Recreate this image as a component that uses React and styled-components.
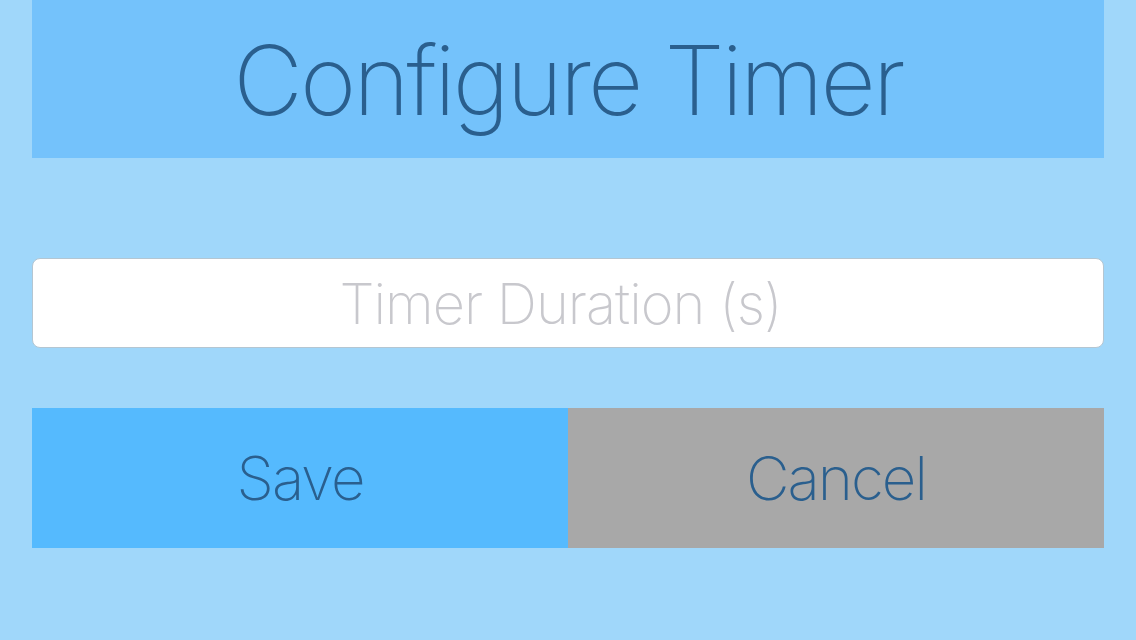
import React from "react";
import styled, { createGlobalStyle } from "styled-components";

const Global = createGlobalStyle`
  html, body { margin: 0; padding: 0; background: #a0d7fa; }
  body { font-family: "Helvetica Neue", Inter, "Liberation Sans", sans-serif; }
  #root { min-height: 640px; }
`;

const Page = styled.div`
  width: 1136px;
  height: 640px;
  box-sizing: border-box;
  padding: 0 32px;
  background: #a0d7fa;
  display: flex;
  flex-direction: column;
`;

const Header = styled.header`
  height: 158px;
  background: #74c2fb;
  display: flex;
  align-items: center;
  justify-content: center;
`;

const Title = styled.h1`
  margin: 0;
  font-family: Inter, "Liberation Sans", sans-serif;
  font-weight: 200;
  font-size: 96px;
  letter-spacing: -3px;
  color: #2a5f8e;
  line-height: 1;
  padding-top: 2px;
`;

const Field = styled.input`
  margin-top: 100px;
  height: 90px;
  box-sizing: border-box;
  width: 100%;
  background: #fff;
  border: 1px solid #b4c6d2;
  border-radius: 8px;
  text-align: center;
  font-family: Inter, "Liberation Sans", sans-serif;
  font-weight: 200;
  font-size: 56px;
  letter-spacing: -1px;
  color: #2a5f8e;
  outline: none;
  padding: 2px 0 0;
  &::placeholder { color: #c8c8cd; }
`;

const ButtonRow = styled.div`
  margin-top: 60px;
  height: 140px;
  display: grid;
  grid-template-columns: 1fr 1fr;
`;

const Button = styled.button`
  border: none;
  margin: 0;
  padding: 0;
  background: ${(p) => (p.$variant === "cancel" ? "#a8a8a8" : "#55bafe")};
  color: #2a5f8e;
  font-family: Inter, "Liberation Sans", sans-serif;
  font-weight: 200;
  font-size: 60px;
  letter-spacing: -2px;
  cursor: pointer;
`;

export default function App() {
  return (
    <>
      <Global />
      <Page>
        <Header>
          <Title>Configure Timer</Title>
        </Header>
        <Field type="number" placeholder="Timer Duration (s)" />
        <ButtonRow>
          <Button>Save</Button>
          <Button $variant="cancel">Cancel</Button>
        </ButtonRow>
      </Page>
    </>
  );
}
